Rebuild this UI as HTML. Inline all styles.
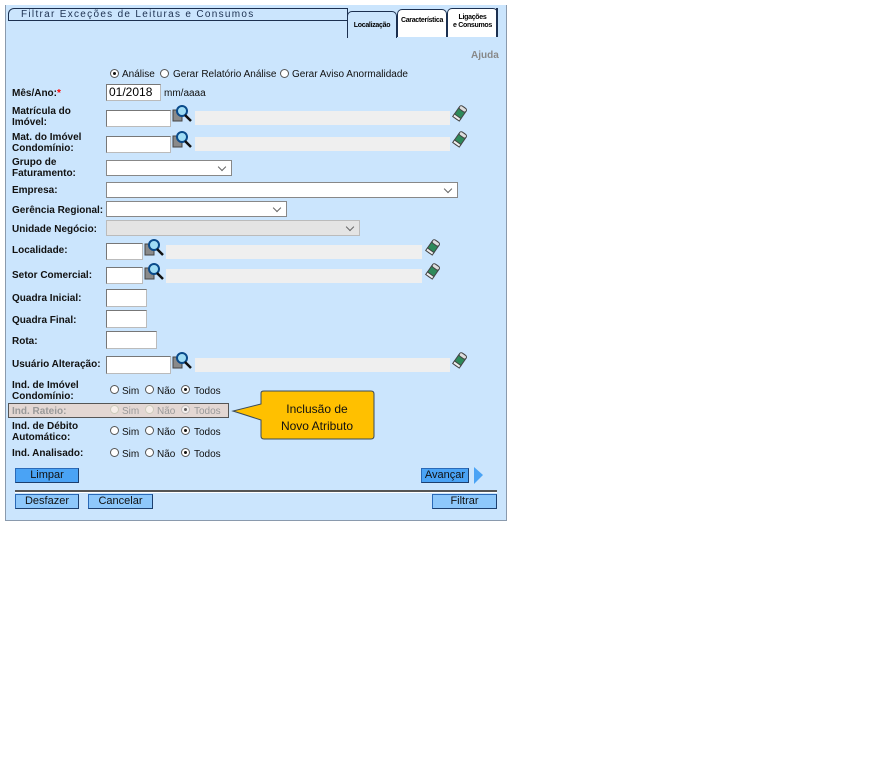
<!DOCTYPE html><html><head><meta charset="utf-8"><style>
body{margin:0;width:882px;height:769px;background:#fff;position:relative;font-family:"Liberation Sans",Arial,sans-serif;overflow:hidden}
.a{position:absolute}
.p{left:5px;top:5px;width:500px;height:515px;background:#cbe5fd;border:1px solid #8a9aad;border-top:none}
.l{position:absolute;font-size:10px;font-weight:bold;color:#111;line-height:11px;margin-top:1px}
.t{position:absolute;font-size:10px;color:#111;line-height:11px}
.i{position:absolute;background:#fff;border:1px solid #777;border-right-color:#bbb;border-bottom-color:#bbb;box-sizing:border-box}
.g{position:absolute;background:#efefef;height:14px}
.s{position:absolute;background:#fff;border:1px solid #888;box-sizing:border-box}
.s:after{content:"";position:absolute;right:6px;top:3px;width:5px;height:5px;border-right:1px solid #666;border-bottom:1px solid #666;transform:rotate(45deg)}
.r{position:absolute;width:9px;height:9px;border:1px solid #555;border-radius:50%;background:#fff;box-sizing:border-box}
.r.on:after{content:"";position:absolute;left:2px;top:2px;width:3px;height:3px;border-radius:50%;background:#111}
.b{position:absolute;height:15px;background:#4aa3f5;border:1px solid #2a6ab8;border-right-color:#1c3f6e;border-bottom-color:#1c3f6e;box-sizing:border-box;font-size:11px;text-align:center;line-height:13px;color:#111}
.b.lt{background:#8ec8fb}
.tab{position:absolute;border:1px solid #1c3050;border-bottom:none;border-radius:5px 5px 0 0;font-size:7px;font-weight:bold;line-height:8px;box-sizing:border-box;text-align:center;letter-spacing:-0.3px;white-space:nowrap;overflow:hidden}
</style></head><body>
<div class="a p"></div>
<div class="a" style="left:8px;top:8px;width:340px;height:13px;background:#cbe5fd;border:1px solid #1c3050;border-radius:6px 0 0 0;font-size:10px;letter-spacing:1.3px;color:#1c3050;padding-left:12px;line-height:12px;box-sizing:border-box">Filtrar Exceções de Leituras e Consumos</div>
<div class="a" style="left:8px;top:20px;width:490px;height:1px;background:#1c3050"></div>
<div class="tab" style="left:347px;top:11px;width:50px;height:27px;background:#cbe5fd;padding-top:10px">Localização</div>
<div class="tab" style="left:397px;top:9px;width:50px;height:28px;background:#fff;padding-top:7px">Característica</div>
<div class="tab" style="left:447px;top:8px;width:51px;height:29px;background:#fff;padding-top:5px">Ligações<br>e Consumos</div>
<div class="a" style="left:496px;top:8px;width:2px;height:29px;background:#1c3050"></div>
<div class="t" style="left:471px;top:50px;font-weight:bold;color:#888">Ajuda</div>

<div class="r on" style="left:110px;top:69px"></div><div class="t" style="left:122px;top:69px">Análise</div>
<div class="r" style="left:160px;top:69px"></div><div class="t" style="left:173px;top:69px">Gerar Relatório Análise</div>
<div class="r" style="left:280px;top:69px"></div><div class="t" style="left:292px;top:69px">Gerar Aviso Anormalidade</div>

<div class="l" style="left:12px;top:87px">Mês/Ano:<span style="color:red">*</span></div>
<div class="i" style="left:106px;top:84px;width:55px;height:17px;font-size:12px;padding-left:2px;line-height:14px">01/2018</div>
<div class="t" style="left:164px;top:88px">mm/aaaa</div>

<div class="l" style="left:12px;top:105px">Matrícula do<br>Imóvel:</div>
<div class="i" style="left:106px;top:110px;width:65px;height:17px"></div>
<div class="l" style="left:12px;top:131px">Mat. do Imóvel<br>Condomínio:</div>
<div class="i" style="left:106px;top:136px;width:65px;height:17px"></div>
<div class="l" style="left:12px;top:156px">Grupo de<br>Faturamento:</div>
<div class="s" style="left:106px;top:160px;width:126px;height:16px"></div>
<div class="l" style="left:12px;top:184px">Empresa:</div>
<div class="s" style="left:106px;top:182px;width:352px;height:16px"></div>
<div class="l" style="left:12px;top:204px">Gerência Regional:</div>
<div class="s" style="left:106px;top:201px;width:181px;height:16px"></div>
<div class="l" style="left:12px;top:223px">Unidade Negócio:</div>
<div class="s" style="left:106px;top:220px;width:254px;height:16px;background:#e4e4e4;border-color:#bbb"></div>
<div class="l" style="left:12px;top:244px">Localidade:</div>
<div class="i" style="left:106px;top:243px;width:37px;height:17px"></div>
<div class="l" style="left:12px;top:269px">Setor Comercial:</div>
<div class="i" style="left:106px;top:267px;width:37px;height:17px"></div>
<div class="l" style="left:12px;top:292px">Quadra Inicial:</div>
<div class="i" style="left:106px;top:289px;width:41px;height:18px"></div>
<div class="l" style="left:12px;top:314px">Quadra Final:</div>
<div class="i" style="left:106px;top:310px;width:41px;height:18px"></div>
<div class="l" style="left:12px;top:335px">Rota:</div>
<div class="i" style="left:106px;top:331px;width:51px;height:18px"></div>
<div class="l" style="left:12px;top:358px">Usuário Alteração:</div>
<div class="i" style="left:106px;top:356px;width:65px;height:18px"></div>

<div class="g" style="left:195px;top:111px;width:255px"></div>
<div class="g" style="left:195px;top:137px;width:255px"></div>
<div class="g" style="left:166px;top:245px;width:256px"></div>
<div class="g" style="left:166px;top:269px;width:256px"></div>
<div class="g" style="left:195px;top:358px;width:255px"></div>
<svg class="a" style="left:0;top:0" width="510" height="400">
<defs>
<g id="lp"><rect x="0" y="5" width="9" height="11" fill="#8a8a8a" stroke="#444" stroke-width="1"/><circle cx="9" cy="6" r="5" fill="#9fdcf5" stroke="#0a4a8a" stroke-width="2"/><line x1="12" y1="10" x2="18" y2="16" stroke="#111" stroke-width="2.5"/></g>
<g id="er"><g transform="rotate(35 7 8)"><rect x="3" y="1" width="8" height="14" rx="3" fill="#2e8a5a" stroke="#444"/><rect x="3" y="1" width="8" height="4" rx="2" fill="#ddd" stroke="#444"/><rect x="3" y="12" width="8" height="3" fill="#eee" stroke="#444"/></g></g>
</defs>
<use href="#lp" x="173" y="105"/><use href="#er" x="453" y="105"/>
<use href="#lp" x="173" y="131"/><use href="#er" x="453" y="131"/>
<use href="#lp" x="145" y="239"/><use href="#er" x="426" y="239"/>
<use href="#lp" x="145" y="263"/><use href="#er" x="426" y="263"/>
<use href="#lp" x="173" y="352"/><use href="#er" x="453" y="352"/>
</svg>

<div class="l" style="left:12px;top:379px">Ind. de Imóvel<br>Condomínio:</div>
<div class="r" style="left:110px;top:385px"></div><div class="t" style="left:122px;top:386px">Sim</div>
<div class="r" style="left:145px;top:385px"></div><div class="t" style="left:157px;top:386px">Não</div>
<div class="r on" style="left:181px;top:385px"></div><div class="t" style="left:194px;top:386px">Todos</div>

<div class="a" style="left:8px;top:403px;width:221px;height:15px;background:#e3d7d3;border:1px solid #555;box-sizing:border-box"></div>
<div class="l" style="left:12px;top:405px;color:#999">Ind. Rateio:</div>
<div class="r" style="left:110px;top:405px;border-color:#ccb;background:#f6ede8"></div><div class="t" style="left:122px;top:406px;color:#999">Sim</div>
<div class="r" style="left:145px;top:405px;border-color:#ccb;background:#f6ede8"></div><div class="t" style="left:157px;top:406px;color:#999">Não</div>
<div class="r on" style="left:181px;top:405px;border-color:#aaa;opacity:.6"></div><div class="t" style="left:194px;top:406px;color:#999">Todos</div>

<div class="l" style="left:12px;top:420px">Ind. de Débito<br>Automático:</div>
<div class="r" style="left:110px;top:426px"></div><div class="t" style="left:122px;top:427px">Sim</div>
<div class="r" style="left:145px;top:426px"></div><div class="t" style="left:157px;top:427px">Não</div>
<div class="r on" style="left:181px;top:426px"></div><div class="t" style="left:194px;top:427px">Todos</div>
<div class="l" style="left:12px;top:447px">Ind. Analisado:</div>
<div class="r" style="left:110px;top:448px"></div><div class="t" style="left:122px;top:449px">Sim</div>
<div class="r" style="left:145px;top:448px"></div><div class="t" style="left:157px;top:449px">Não</div>
<div class="r on" style="left:181px;top:448px"></div><div class="t" style="left:194px;top:449px">Todos</div>

<svg class="a" style="left:228px;top:390px" width="150" height="54">
<path d="M33 3 Q33 1 36 1 H143 Q146 1 146 4 V46 Q146 49 143 49 H36 Q33 49 33 46 V30 L5 21 L33 14 Z" fill="#ffc000" stroke="#3a4a5a" stroke-width="1"/>
<text x="89" y="23" font-family="Liberation Sans,sans-serif" font-size="12" text-anchor="middle" fill="#111">Inclusão de</text>
<text x="89" y="40" font-family="Liberation Sans,sans-serif" font-size="12" text-anchor="middle" fill="#111">Novo Atributo</text>
</svg>

<div class="b" style="left:15px;top:468px;width:64px">Limpar</div>
<div class="b" style="left:421px;top:468px;width:48px">Avançar</div>
<svg class="a" style="left:474px;top:467px" width="10" height="18"><path d="M0 0 L9 8 L0 17 Z" fill="#4aa3f5"/></svg>
<div class="a" style="left:15px;top:490px;width:482px;height:2px;background:#555;border-bottom:1px solid #fff"></div>
<div class="b lt" style="left:15px;top:494px;width:64px">Desfazer</div>
<div class="b lt" style="left:88px;top:494px;width:65px">Cancelar</div>
<div class="b lt" style="left:432px;top:494px;width:65px">Filtrar</div>
</body></html>
